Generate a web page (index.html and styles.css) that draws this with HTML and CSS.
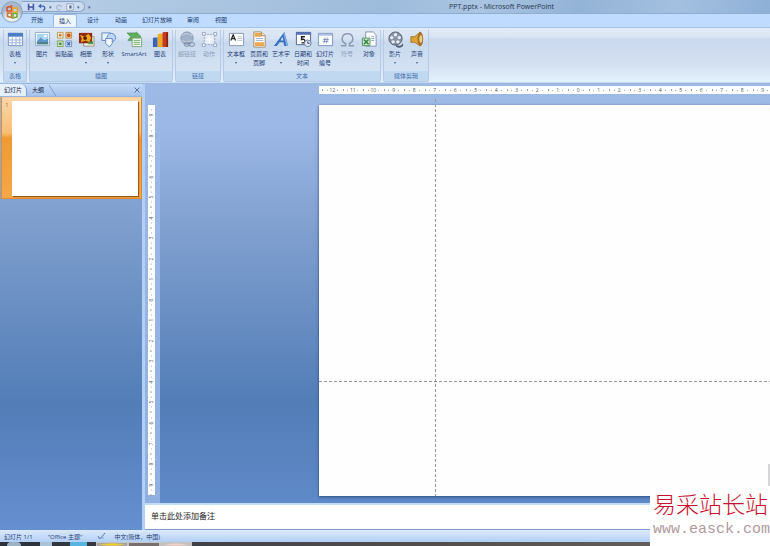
FILE: index.html
```html
<!DOCTYPE html>
<html lang="zh-CN">
  <head>
    <meta charset="utf-8">
    <title>PPT.pptx - Microsoft PowerPoint</title>
    <link rel="stylesheet" href="styles.css">
  </head>
  <body>

    <header class="titlebar">
      <button class="office" aria-label="Office">
        <svg viewBox="0 0 22 22">
          <defs>
            <radialGradient id="orb" cx="50%" cy="75%"><stop offset="0" stop-color="#fff"/><stop offset=".6" stop-color="#dfe6ef"/><stop offset="1" stop-color="#a7b8ce"/></radialGradient>
          </defs>
          <circle cx="11" cy="11" r="10.3" fill="url(#orb)" stroke="#7f98b8" stroke-width=".8"/>
          <g fill="none" stroke-width="1.600">
            <path d="M6 6.500l4.500-1.500v5H6z" stroke="#d8542b"/>
            <path d="M12 7h4.500v4H12z" stroke="#e9a52a"/>
            <path d="M6.500 12h4v4.500l-4-1z" stroke="#c9762e"/>
            <path d="M12 12.500h4v3.500l-4 1z" stroke="#76a83a"/>
          </g>
        </svg>
      </button>
      <div class="quick">
        <button aria-label="保存"><svg viewBox="0 0 10 10"><path d="M1 1h8v8H1z" fill="#4257a8"/><path d="M3 1h4v3H3z" fill="#e9eefa"/><path d="M3 6h4v3H3z" fill="#c7d2ee"/></svg></button>
        <button aria-label="撤消"><svg viewBox="0 0 10 10"><path d="M2 4h4a2.500 2.500 0 0 1 0 5" fill="none" stroke="#3e63b5" stroke-width="1.600"/><path d="M0 4l4-3v6z" fill="#3e63b5"/></svg></button>
        <span class="caret">▾</span>
        <button aria-label="恢复"><svg viewBox="0 0 10 10"><path d="M8 5a3 3 0 1 0-1 3" fill="none" stroke="#a5b4cc" stroke-width="1.400"/></svg></button>
        <button aria-label="放映"><svg viewBox="0 0 10 10"><path d="M1 1h8v8H1z" fill="#f4f7fc" stroke="#8497b8"/><path d="M4 3h3v4H4z" fill="#5a6f9a"/></svg></button>
        <span class="caret">▾</span>
      </div>
      <button class="more" aria-label="自定义快速访问工具栏">▾</button>
      <h1 class="caption">PPT.pptx - Microsoft PowerPoint</h1>
    </header>

    <nav class="tabs">
      <button>开始</button>
      <button class="active">插入</button>
      <button>设计</button>
      <button>动画</button>
      <button class="wide">幻灯片放映</button>
      <button>审阅</button>
      <button>视图</button>
    </nav>

    <div class="ribbon">
      <section class="group">
        <div class="tools">
          <button class="drop">
            <svg viewBox="0 0 18 18"><path d="M1.500 2.500h15v13h-15z" fill="#fff" stroke="#6f8fc2"/><path d="M1 2h16v4H1z" fill="#4d7dc4"/><path d="M1 9.500h16M1 12.500h16M5.500 6v10M9.500 6v10M13.500 6v10" stroke="#9bb3d8"/></svg>
            <span>表格</span>
          </button>
        </div>
        <h2>表格</h2>
      </section>

      <section class="group pictures">
        <div class="tools">
          <button>
            <svg viewBox="0 0 18 18"><path d="M1.500 1.500h15v14h-15z" fill="#fff" stroke="#8fa7c6"/><path d="M3 3h12v11H3z" fill="#a9d3f2"/><path d="M3 11l4-4 4 3 4-2v6H3z" fill="#5b96c9"/><path d="M3 12h12v2H3z" fill="#4c7f75"/><circle cx="12" cy="5.500" r="1.500" fill="#fff"/></svg>
            <span>图片</span>
          </button>
          <button>
            <svg viewBox="0 0 18 18"><path d="M1.500 1.500h6v6h-6z" fill="#fbf3d2" stroke="#b59b52"/><path d="M10.500 1.500h6v6h-6z" fill="#f8d9a0" stroke="#c28640"/><path d="M1.500 10.500h6v6h-6z" fill="#dceccb" stroke="#7ba060"/><path d="M10.500 10.500h6v6h-6z" fill="#e6edf8" stroke="#6f8ec2"/><circle cx="4.500" cy="4.500" r="1.500" fill="#d2783a"/><circle cx="13.500" cy="4.500" r="2" fill="#c9541f"/><circle cx="4.500" cy="13.500" r="1.700" fill="#4b9a48"/><path d="M12 12l3 3m0-3l-3 3" stroke="#3c68b2" stroke-width="1.500"/></svg>
            <span>剪贴画</span>
          </button>
          <button class="drop">
            <svg viewBox="0 0 18 18"><path d="M6 6h11v10H6z" fill="#f2f2ee" stroke="#9a8f78"/><path d="M1 2h14v11H1z" fill="#8f2a12"/><path d="M2 4l5 2 4-3 3 4-2 5-4-2-5 2 1-4z" fill="#f0a81e"/><circle cx="7.500" cy="7.500" r="2" fill="#5d1d0b"/><path d="M11 11h5v3h-5z" fill="#4f9140"/></svg>
            <span>相册</span>
          </button>
          <button class="drop">
            <svg viewBox="0 0 18 18"><path d="M2 2h9v8H2z" fill="#e7f1fd" stroke="#5f87bf"/><circle cx="12" cy="7" r="4.500" fill="#bcd8f5" stroke="#5f87bf"/><path d="M6 8h7v5l-3 4-4-4z" fill="#f4f9ff" stroke="#5f87bf"/></svg>
            <span>形状</span>
          </button>
          <button class="wide">
            <svg viewBox="0 0 18 18"><path d="M1 2h9l1-1 5 5-5 4H2l3-4z" fill="#5fae5b" stroke="#3f8a46" stroke-width=".6"/><path d="M6.500 7.500h10v9h-10z" fill="#f3faf0" stroke="#7aa57a"/><path d="M8 10h7M8 12h7M8 14h7" stroke="#74b06e"/></svg>
            <span>SmartArt</span>
          </button>
          <button>
            <svg viewBox="0 0 18 18"><path d="M1 8l1-1h4v10H1z" fill="#3765b4"/><path d="M6 4l1-1h4v14H6z" fill="#efab20"/><path d="M11 2l1-1h5v16h-6z" fill="#c23e1d"/><path d="M15 2l2-1v16h-2z" fill="#8f2410"/></svg>
            <span>图表</span>
          </button>
        </div>
        <h2>插图</h2>
      </section>

      <section class="group">
        <div class="tools">
          <button disabled>
            <svg viewBox="0 0 18 18"><circle cx="8.500" cy="7.500" r="6.500" fill="#a3b0ca" stroke="#8492b0"/><path d="M3 5c3-3 8-3 11 0M3 10c3 2 8 2 11 0" fill="none" stroke="#c8d2e3"/><rect x="5.500" y="12.500" width="6" height="3.500" rx="1.700" fill="none" stroke="#77859f"/><rect x="10.500" y="12.500" width="6" height="3.500" rx="1.700" fill="none" stroke="#77859f"/></svg>
            <span>超链接</span>
          </button>
          <button disabled>
            <svg viewBox="0 0 18 18"><path d="M3.500 3.500h11v11h-11z" fill="#e6ecf6" stroke="#94a3bf" stroke-dasharray="2 1"/><g fill="#fff" stroke="#94a3bf"><path d="M1.500 1.500h3v3h-3zM13.500 1.500h3v3h-3zM1.500 13.500h3v3h-3zM13.500 13.500h3v3h-3z"/></g><path d="M9 5l1 3 3 1-3 1-1 3-1-3-3-1 3-1z" fill="#fff"/></svg>
            <span>动作</span>
          </button>
        </div>
        <h2>链接</h2>
      </section>

      <section class="group text">
        <div class="tools">
          <button class="drop">
            <svg viewBox="0 0 18 18"><path d="M1.500 2.500h15v13h-15z" fill="#fff" stroke="#8796ad"/><path d="M3 10l2.500-6L8 10M4 8h3" fill="none" stroke="#222" stroke-width="1.300"/><path d="M10 6h5M10 8h5M10 10h5" stroke="#b9c4d4"/></svg>
            <span>文本框</span>
          </button>
          <button>
            <svg viewBox="0 0 18 18"><path d="M3 1h8l4 4v12H3z" fill="#fff" stroke="#a08a64"/><path d="M4 2h7v4H4zM4 12h10v4H4z" fill="#e9a94c"/><path d="M5 8h8M5 10h8" stroke="#9db0cd"/><path d="M11 1v4h4" fill="#f7e2bd" stroke="#a08a64"/></svg>
            <span>页眉和<br>页脚</span>
          </button>
          <button class="drop">
            <svg viewBox="0 0 18 18"><path d="M1 16L12 1l4 15h-4l-1-4H7l-3 4zm7-6h3l-1-4z" fill="#356fc0"/><path d="M12 1l4 15h-2L11 3z" fill="#7faae2"/></svg>
            <span>艺术字</span>
          </button>
          <button>
            <svg viewBox="0 0 18 18"><path d="M1.500 1.500h15v13h-15z" fill="#fff" stroke="#4c669a"/><path d="M1 1h16v3H1z" fill="#5471b0"/><path d="M10.500 6H7v3q3-1 3.500 1.500T7 12.500" fill="none" stroke="#222" stroke-width="1.500"/><circle cx="13.500" cy="13" r="3.500" fill="#dfe9f8" stroke="#6b7d9e"/><path d="M13.500 11v2h2" fill="none" stroke="#334"/></svg>
            <span>日期和<br>时间</span>
          </button>
          <button>
            <svg viewBox="0 0 18 18"><path d="M1.500 2.500h15v13h-15z" fill="#f9fbfe" stroke="#7d94ba"/><path d="M2 3h14v2H2z" fill="#a9c0e2"/><path d="M8.500 7l-1 6M11 7l-1 6M6.500 9h6M6 11h6" stroke="#6c83b0" stroke-width=".8"/></svg>
            <span>幻灯片<br>编号</span>
          </button>
          <button disabled>
            <svg viewBox="0 0 18 18"><path d="M2 15.500h5v-2C1 10 3 3 9 3s8 7 2 10.500v2h5" fill="none" stroke="#8d9ab3" stroke-width="1.600"/></svg>
            <span>符号</span>
          </button>
          <button>
            <svg viewBox="0 0 18 18"><path d="M5 1h8l3 3v12H5z" fill="#fff" stroke="#7c93b5"/><path d="M1.500 7.500h8v8h-8z" fill="#d6ecd1" stroke="#4f9057"/><path d="M3 14l5-5M3 9l5 5" stroke="#2e8041" stroke-width="1.600"/><path d="M11 6h3M11 8h3M11 10h3" stroke="#7ea0d0"/></svg>
            <span>对象</span>
          </button>
        </div>
        <h2>文本</h2>
      </section>

      <section class="group">
        <div class="tools">
          <button class="drop">
            <svg viewBox="0 0 18 18"><circle cx="9" cy="8" r="7" fill="#8793a3" stroke="#56606e"/><g fill="#e8eef5"><circle cx="9" cy="4" r="1.800"/><circle cx="5" cy="7" r="1.800"/><circle cx="13" cy="7" r="1.800"/><circle cx="6.500" cy="11.500" r="1.800"/><circle cx="11.500" cy="11.500" r="1.800"/></g><path d="M9 14q5 4 8-1v3q-3 3-7 1z" fill="#4e5a6b"/></svg>
            <span>影片</span>
          </button>
          <button class="drop">
            <svg viewBox="0 0 18 18"><path d="M2 6h4l6-5v15l-6-4H2z" fill="#e0a436" stroke="#94641a" stroke-width=".8"/><ellipse cx="12" cy="8.500" rx="3" ry="7.500" fill="#a9722c"/><ellipse cx="12.500" cy="8.500" rx="1.500" ry="4" fill="#f3cf80"/></svg>
            <span>声音</span>
          </button>
        </div>
        <h2>媒体剪辑</h2>
      </section>
    </div>

    <main class="window">
      <aside class="outline">
        <div class="outline-tabs">
          <button class="active">幻灯片</button>
          <button>大纲</button>
          <svg class="slant" viewBox="0 0 8 12"><path d="M0 1l7 11" stroke="#7f9fcf"/></svg>
          <button class="close" aria-label="关闭"><svg viewBox="0 0 6 6"><path d="M.500.500l5 5m0-5l-5 5" stroke="#3c5a8c" stroke-width=".8"/></svg></button>
        </div>
        <div class="thumb">
          <span>1</span>
          <div class="page"></div>
        </div>
      </aside>

      <div class="editor">
        <div class="workspace">
          <div class="ruler-v">
            <div class="scale">
              <span>9</span><span>8</span><span>7</span><span>6</span><span>5</span><span>4</span><span>3</span><span>2</span><span>1</span><span>0</span><span>1</span><span>2</span><span>3</span><span>4</span><span>5</span><span>6</span><span>7</span><span>8</span><span>9</span>
            </div>
          </div>
          <div class="canvas">
            <div class="ruler-h">
              <div class="scale">
                <span>12</span><span>11</span><span>10</span><span>9</span><span>8</span><span>7</span><span>6</span><span>5</span><span>4</span><span>3</span><span>2</span><span>1</span><span>0</span><span>1</span><span>2</span><span>3</span><span>4</span><span>5</span><span>6</span><span>7</span><span>8</span><span>9</span>
              </div>
            </div>
            <div class="slide">
              <i class="guide-x"></i>
              <i class="guide-y"></i>
              <i class="handle"></i>
            </div>
          </div>
        </div>
        <div class="notes">单击此处添加备注</div>
      </div>
    </main>

    <footer class="status">
      <span>幻灯片 1/1</span>
      <span>"Office 主题"</span>
      <svg viewBox="0 0 9 8"><path d="M1 4l2 3 5-6" fill="none" stroke="#5273ab"/><path d="M1 6h6" stroke="#8aa3cc"/></svg>
      <span>中文(简体，中国)</span>
    </footer>

    <div class="taskbar">
      <i class="start"></i><i class="folder"></i><i class="media"></i><i class="app yellow"></i><i class="app"></i><i class="app pink"></i>
    </div>

    <div class="watermark">
      <b>易采站长站</b>
      <a href="#">www.easck.com</a>
    </div>

  </body>
</html>
```
FILE: styles.css
```css
* {
  box-sizing: border-box;
}

body {
  margin: 0;
  height: 100vh;
  display: flex;
  flex-direction: column;
  overflow: hidden;
  position: relative;
  font-family: "Open Sans", "Noto Sans CJK SC", sans-serif;
  font-size: 6px;
  color: #1d3b73;
  background: #bfdbff;
}

button {
  margin: 0;
  padding: 0;
  border: 0;
  background: none;
  font: inherit;
  color: inherit;
}

h1, h2 {
  margin: 0;
  font-weight: normal;
}

svg {
  display: block;
}

/* title bar */

.titlebar {
  display: flex;
  align-items: center;
  height: 14px;
  flex: none;
  background: linear-gradient(100deg, #b9cfe6 0%, #a9c4e0 30%, #9dbbdb 50%, #a9c5e2 62%, #93b3d6 75%, #a3c0e0 88%, #8eb0d6 100%);
  border-bottom: 1px solid #8fadd0;
}

.office {
  position: absolute;
  left: 1px;
  top: 1px;
  width: 22px;
  height: 22px;
  z-index: 1;
}

.quick {
  display: flex;
  align-items: center;
  gap: 3px;
  height: 11px;
  margin-left: 22px;
  padding: 0 5px;
  width: 63px;
  border: 1px solid #8aa5c9;
  border-left: 0;
  border-radius: 0 6px 6px 0;
  background: #cbdcf0;
}

.quick svg {
  width: 8px;
  height: 8px;
}

.caret, .more {
  font-size: 5px;
  color: #47679c;
}

.more {
  margin-left: 3px;
}

.caption {
  margin-left: 358px;
  font-size: 7px;
  line-height: 13px;
  color: #26364d;
  white-space: nowrap;
}

/* ribbon tabs */

.tabs {
  display: flex;
  height: 13px;
  flex: none;
  gap: 4px;
  padding-left: 25px;
  background: #bfdbff;
}

.tabs button {
  width: 24px;
  line-height: 13px;
}

.tabs .wide {
  width: 40px;
}

.tabs .active {
  background: #eff5fd;
  border: 1px solid #9ab8e0;
  border-bottom: 0;
  border-radius: 2px 2px 0 0;
  line-height: 12px;
}

/* ribbon */

.ribbon {
  display: flex;
  gap: 2px;
  height: 56px;
  flex: none;
  padding: 1px 3px 0;
  border-top: 1px solid #a5c3ea;
  border-bottom: 1px solid #c5dcf5;
  background: linear-gradient(#e3ebf6 0, #dbe5f3 8px, #c9d8ed 12px, #d3e0f0 36px, #e3f1fd 100%);
}

.group {
  display: flex;
  flex-direction: column;
  border: 1px solid #b4cae6;
  border-top-color: #e0eaf6;
  border-radius: 2px;
  background: linear-gradient(#dee8f5 0, #d8e4f2 8px, #c8d9ee 12px, #d8e6f5 100%);
}

.tools {
  display: flex;
  flex: 1;
}

.pictures .tools {
  padding: 0 1px;
}

.tools button {
  display: flex;
  flex-direction: column;
  align-items: center;
  width: 22px;
  padding-top: 1px;
  line-height: 9px;
  white-space: nowrap;
}

.tools .wide {
  width: 30px;
}

.text .tools button:first-child {
  width: 24px;
}

.tools svg {
  width: 17px;
  height: 17px;
  margin-bottom: 2px;
}

.tools button:disabled {
  color: #8c9cb8;
}

.drop::after {
  content: "";
  margin-top: 3px;
  border: 1px solid transparent;
  border-top: 2px solid #3d5a8d;
}

.group h2 {
  font-size: 6px;
  line-height: 10px;
  text-align: center;
  color: #3e6aaa;
  background: #c1d8f1;
}

/* slide list */

.window {
  display: flex;
  flex: 1;
  min-height: 0;
  border-top: 1px solid #9cb9dd;
}

.outline {
  width: 142px;
  flex: none;
  background: linear-gradient(#9ab7e6 0, #7f9fce 30%, #527db7 72%, #658fd0 100%);
}

.outline-tabs {
  display: flex;
  height: 12px;
  background: linear-gradient(#c7ddf8, #a3c1ea);
  line-height: 11px;
  color: #10203c;
}

.outline-tabs .active {
  width: 27px;
  background: #e6f0fd;
  border-right: 1px solid #7f9fcf;
  border-radius: 0 6px 0 0;
}

.outline-tabs button {
  width: 22px;
}

.outline-tabs .slant {
  width: 8px;
  height: 12px;
}

.outline-tabs .close {
  width: 10px;
  margin-left: auto;
  padding: 2px;
}

.thumb {
  display: flex;
  margin: 1px 0 0 1px;
  padding: 3px 3px 2px 0;
  border: 1px solid #e08c2c;
  border-top-color: #f7cd98;
  background: linear-gradient(#fbd7a8 0, #f7bd75 35%, #ef9a33 40%, #f4a847 100%);
}

.thumb span {
  width: 10px;
  text-align: center;
  color: #b07232;
}

.page {
  flex: 1;
  aspect-ratio: 4 / 3;
  background: #fff;
  box-shadow: 1px 1px 1px #9a5c18;
}

/* editing area */

.editor {
  display: flex;
  flex-direction: column;
  flex: 1;
  min-width: 0;
  border-left: 3px solid #b2cff5;
}

.workspace {
  display: flex;
  flex: 1;
  min-height: 0;
  background: #9dbae6;
}

.scale {
  display: flex;
  flex: 1;
  font-size: 5px;
  color: #4c5665;
}

.scale span {
  flex: 1;
  min-width: 0;
  min-height: 0;
  text-align: center;
}

.ruler-v {
  display: flex;
  width: 15px;
  flex: none;
  padding: 21px 5px 8px 3px;
  background: linear-gradient(#9dbae6, #8fb0e0);
}

.ruler-v .scale {
  flex-direction: column;
  background: #fff;
}

/* half-unit tick at the cell edge, quarter-unit dots between */
.ruler-v .scale span {
  writing-mode: vertical-rl;
  transform: rotate(180deg);
  line-height: 7px;
  background:
    linear-gradient(#99a, #99a) 50% 0 / 2px 1px no-repeat,
    linear-gradient(#aab, #aab) 50% 25% / 1px 1px no-repeat,
    linear-gradient(#aab, #aab) 50% 75% / 1px 1px no-repeat;
}

.canvas {
  display: flex;
  flex-direction: column;
  flex: 1;
  min-width: 0;
  padding: 2px 0 7px 159px;
  background: linear-gradient(#9dbae6 0, #9cb8e6 10%, #7f9fcf 35%, #527db7 76%, #5f8ac8 100%);
}

.ruler-h {
  display: flex;
  height: 8px;
  margin-bottom: 11px;
  padding-left: 3px;
  background: #fff;
  overflow: hidden;
}

.ruler-h .scale {
  margin-right: -3px;
}

.ruler-h .scale span {
  line-height: 8px;
  background:
    linear-gradient(#99a, #99a) 0 50% / 1px 2px no-repeat,
    linear-gradient(#aab, #aab) 25% 50% / 1px 1px no-repeat,
    linear-gradient(#aab, #aab) 75% 50% / 1px 1px no-repeat;
}

.slide {
  position: relative;
  flex: 1;
  background: #fefefe;
  box-shadow: 0 1px 3px #2b4c80;
}

.guide-x {
  position: absolute;
  top: -6px;
  bottom: 0;
  left: 116px;
  width: 1px;
  background: repeating-linear-gradient(#9a9a9a 0 3px, transparent 3px 5px);
}

.guide-y {
  position: absolute;
  left: 0;
  right: 0;
  top: 276px;
  height: 1px;
  background: repeating-linear-gradient(90deg, #9a9a9a 0 3px, transparent 3px 5px);
}

.handle {
  position: absolute;
  right: 0;
  bottom: 10px;
  width: 2px;
  height: 22px;
  background: #d5d5d8;
}

.notes {
  height: 27px;
  flex: none;
  padding-left: 6px;
  border-top: 2px solid #c2dbfa;
  border-bottom: 1px solid #7f9cc8;
  background: #fff;
  font-size: 8px;
  line-height: 22px;
  color: #222;
}

/* status bar and taskbar */

.status {
  display: flex;
  align-items: center;
  gap: 15px;
  height: 12px;
  flex: none;
  padding-left: 4px;
  background: linear-gradient(#dbe9fb, #b3cff5);
}

.status svg {
  width: 9px;
  height: 8px;
}

.status svg + span {
  margin-left: -7px;
}

.taskbar {
  display: flex;
  height: 4px;
  flex: none;
  background: linear-gradient(90deg, #2b323c, #43444a 30%, #55504e 60%, #6b6663);
}

.start {
  width: 14px;
  margin-left: 7px;
  border-radius: 7px 7px 0 0;
  background: #9db4c6;
}

.folder {
  width: 12px;
  margin-left: 19px;
  background: #a9c3d8;
}

.media {
  width: 17px;
  margin: 0 9px 0 18px;
  background: #58b4e0;
}

.app {
  width: 32px;
  border: 1px solid #c4c4c4;
  border-bottom: 0;
  background: #77706e;
}

.app.yellow {
  background: radial-gradient(#f4cf2c 40%, #a9a6a0 60%);
}

.app.pink {
  background: radial-gradient(#f2d3c6 30%, #c6c0be 60%);
}

/* site mark over the bottom right corner */

.watermark {
  position: absolute;
  right: 0;
  bottom: 0;
  width: 120px;
  height: 60px;
  padding-left: 3px;
  background: #fff;
  white-space: nowrap;
}

.watermark b {
  display: block;
  font: 23px/34px "Noto Sans CJK SC", sans-serif;
  font-weight: 300;
  color: #c8102e;
}

.watermark a {
  display: block;
  font: 15px/20px "Liberation Mono", monospace;
  color: #b09a9e;
  text-decoration: none;
}
```
